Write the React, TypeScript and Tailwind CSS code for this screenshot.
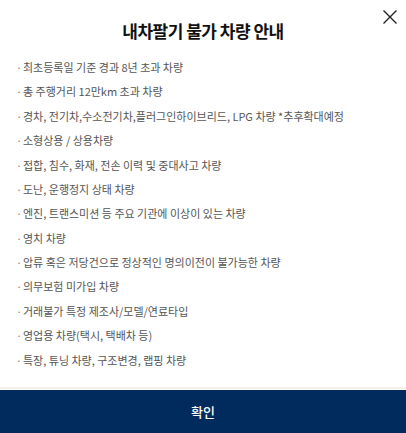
import React from "react";

const items = [
  "최초등록일 기준 경과 8년 초과 차량",
  "총 주행거리 12만km 초과 차량",
  "경차, 전기차,수소전기차,플러그인하이브리드, LPG 차량 *추후확대예정",
  "소형상용 / 상용차량",
  "접합, 침수, 화재, 전손 이력 및 중대사고 차량",
  "도난, 운행정지 상태 차량",
  "엔진, 트랜스미션 등 주요 기관에 이상이 있는 차량",
  "영치 차량",
  "압류 혹은 저당건으로 정상적인 명의이전이 불가능한 차량",
  "의무보험 미가입 차량",
  "거래불가 특정 제조사/모델/연료타입",
  "영업용 차량(택시, 택배차 등)",
  "특장, 튜닝 차량, 구조변경, 랩핑 차량",
];

export default function App() {
  return (
    <div
      className="w-[406px] h-[433px] bg-white flex flex-col relative overflow-hidden"
      style={{ fontFamily: '"Noto Sans CJK KR", "Noto Sans", sans-serif' }}
    >
      <button className="absolute right-[8px] top-[9px] w-[16px] h-[16px] flex items-center justify-center">
        <svg width="16" height="16" viewBox="0 0 16 16">
          <path d="M1.5 1.5 L14.5 14.5 M14.5 1.5 L1.5 14.5" stroke="#222" strokeWidth="1.4" fill="none" />
        </svg>
      </button>
      <h1 className="pt-[18px] h-[55px] text-center text-[17px] font-bold leading-[26px] text-[#111] tracking-[-0.5px]">
        내차팔기 불가 차량 안내
      </h1>
      <ul className="flex flex-col pl-[16px]">
        {items.map((t) => (
          <li key={t} className="flex h-[24.4px] items-center text-[11px] text-[#555]">
            <span className="w-[7px] text-[#888]">·</span>
            <span className="whitespace-nowrap">{t}</span>
          </li>
        ))}
      </ul>
      <div className="flex-1" />
      <div className="h-[2px] bg-[#f6f1e6] mb-[1px]" />
      <button className="h-[43px] w-full bg-[#012b5d] text-white text-[13px] font-medium flex items-center justify-center">
        확인
      </button>
    </div>
  );
}
